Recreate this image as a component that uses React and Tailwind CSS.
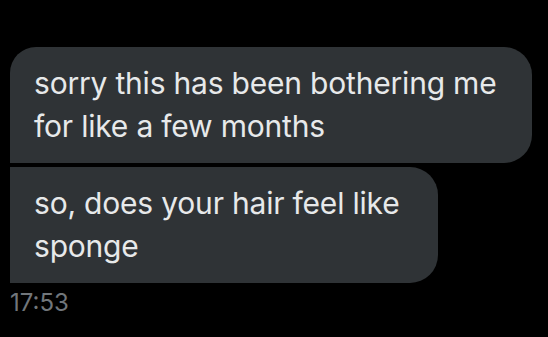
export default function App() {
  return (
    <div className="h-[337px] w-full bg-black pt-[47px] pl-[10px] font-['Inter',sans-serif] overflow-hidden">
      <div className="flex flex-col gap-[4px]">
        <div className="w-[522px] h-[116px] bg-[#2f3336] rounded-tl-[26px] rounded-tr-[28px] rounded-br-[28px] pl-[24px] pt-[15px] text-[#e7e9ea] text-[30px] leading-[43px] tracking-[-0.2px]">
          sorry this has been bothering me
          <br />
          for like a few months
        </div>
        <div className="w-[428px] h-[116px] bg-[#2f3336] rounded-tr-[28px] rounded-br-[28px] pl-[24px] pt-[15px] text-[#e7e9ea] text-[30px] leading-[43px] tracking-[-0.2px]">
          so, does your hair feel like
          <br />
          sponge
        </div>
      </div>
      <div className="mt-[5px] text-[#71767b] text-[24px] leading-[30px]">17:53</div>
    </div>
  );
}
